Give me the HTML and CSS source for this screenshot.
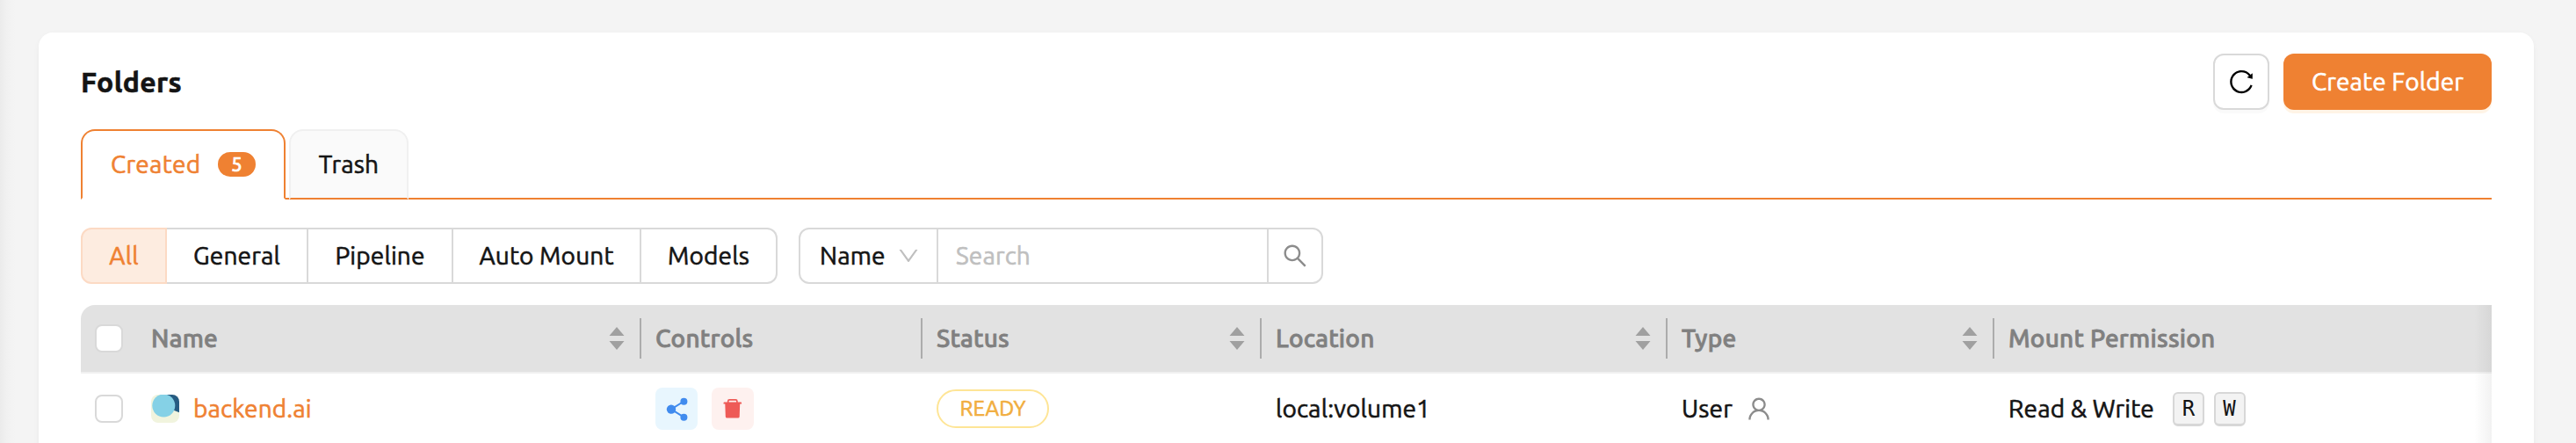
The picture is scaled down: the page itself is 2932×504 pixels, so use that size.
FILE: index.html
```html
<!DOCTYPE html>
<html lang="en">
<head>
<meta charset="utf-8">
<title>Folders</title>
<link rel="stylesheet" href="styles.css">
</head>
<body>
<main class="page">
  <section class="card">
    <header class="card-head">
      <h1 class="title">Folders</h1>
      <div class="actions">
        <button class="btn btn-icon" aria-label="Refresh">
          <svg class="icon" viewBox="0 0 1024 1024"><path d="M909.1 209.3l-56.4 44.1C775.8 155.1 656.2 92 521.9 92 290 92 102.3 279.5 102 511.5 101.7 743.7 289.8 932 521.9 932c181.3 0 335.8-115 394.6-276.1 1.5-4.2-.7-8.9-4.9-10.3l-56.7-19.5a8 8 0 00-10.1 4.8c-1.8 5-3.8 10-5.9 14.9-17.3 41-42.1 77.8-73.7 109.4A344.77 344.77 0 01655.9 829c-42.3 17.9-87.4 27-133.8 27-46.5 0-91.5-9.1-133.8-27A341.5 341.5 0 01279 755.2a342.16 342.16 0 01-73.7-109.4c-17.9-42.4-27-87.4-27-133.9s9.1-91.5 27-133.9c17.3-41 42.1-77.8 73.7-109.4 31.6-31.6 68.4-56.4 109.3-73.8 42.3-17.9 87.4-27 133.8-27 46.5 0 91.5 9.1 133.8 27a341.5 341.5 0 01109.3 73.8c9.9 9.9 19.2 20.4 27.8 31.4l-60.2 47a8 8 0 003 14.1l175.6 43c5 1.2 9.9-2.6 9.9-7.7l.8-180.9c-.1-6.6-7.8-10.3-13-6.2z"/></svg>
        </button>
        <button class="btn btn-primary">Create Folder</button>
      </div>
    </header>

    <nav class="tabs">
      <div class="tab tab-active"><span class="tab-label">Created</span><span class="badge">5</span></div>
      <div class="tab tab-idle">Trash</div>
    </nav>

    <div class="filters">
      <div class="segments">
        <div class="segment segment-active seg-all">All</div>
        <div class="segment seg-general">General</div>
        <div class="segment seg-pipeline">Pipeline</div>
        <div class="segment seg-auto">Auto Mount</div>
        <div class="segment seg-models">Models</div>
      </div>
      <div class="search">
        <div class="search-field"><span>Name</span>
          <svg class="chevron" viewBox="0 0 1024 1024"><path d="M884 256h-75c-5.1 0-9.9 2.5-12.9 6.6L512 654.2 227.9 262.6c-3-4.1-7.8-6.6-12.9-6.6h-75c-6.5 0-10.3 7.4-6.5 12.7l352.6 486.1c12.8 17.6 39 17.6 51.7 0l352.6-486.1c3.9-5.3.1-12.7-6.4-12.7z"/></svg>
        </div>
        <div class="search-input">Search</div>
        <div class="search-button">
          <svg class="icon" viewBox="0 0 1024 1024"><path d="M909.6 854.5L649.9 594.8C690.2 542.7 712 479 712 412c0-80.2-31.3-155.4-87.9-212.1-56.6-56.7-132-87.9-212.1-87.9s-155.5 31.3-212.1 87.9C143.2 256.5 112 331.8 112 412c0 80.1 31.3 155.5 87.9 212.1C256.5 680.8 331.8 712 412 712c67 0 130.6-21.8 182.7-62l259.7 259.6a8.2 8.2 0 0011.6 0l43.6-43.5a8.2 8.2 0 000-11.6zM570.4 570.4C528 612.7 471.8 636 412 636s-116-23.3-158.4-65.6C211.3 528 188 471.8 188 412s23.3-116.1 65.6-158.4C296 211.3 352.2 188 412 188s116.1 23.2 158.4 65.6S636 352.2 636 412s-23.3 116.1-65.6 158.4z"/></svg>
        </div>
      </div>
    </div>

    <div class="table">
      <div class="row row-head">
        <div class="cell cell-check"><span class="checkbox"></span></div>
        <div class="cell divided"><span>Name</span><svg class="sorter" viewBox="0 0 18 26"><path d="M9 0l8.5 10H.5zM9 26L.5 16h17z"/></svg></div>
        <div class="cell divided"><span>Controls</span></div>
        <div class="cell divided"><span>Status</span><svg class="sorter" viewBox="0 0 18 26"><path d="M9 0l8.5 10H.5zM9 26L.5 16h17z"/></svg></div>
        <div class="cell divided"><span>Location</span><svg class="sorter" viewBox="0 0 18 26"><path d="M9 0l8.5 10H.5zM9 26L.5 16h17z"/></svg></div>
        <div class="cell divided"><span>Type</span><svg class="sorter" viewBox="0 0 18 26"><path d="M9 0l8.5 10H.5zM9 26L.5 16h17z"/></svg></div>
        <div class="cell"><span>Mount Permission</span></div>
      </div>
      <div class="row row-body">
        <div class="cell cell-check"><span class="checkbox"></span></div>
        <div class="cell">
          <svg class="avatar" viewBox="0 0 32 32"><rect width="32" height="32" fill="#f1f4de"/><path d="M15 0h17v20.300l-7-2.800z" fill="#265b82"/><circle cx="14.300" cy="12.500" r="13" fill="#85d1e6"/></svg>
          <a class="folder-link">backend.ai</a>
        </div>
        <div class="cell controls">
          <span class="tool tool-share"><svg viewBox="0 0 48 48"><path d="M18 24.600L32.400 15.500M18 24.600l14.400 9" fill="none" stroke="#408bee" stroke-width="2"/><circle cx="18" cy="24.600" r="5.200"/><circle cx="32.400" cy="15.700" r="4"/><circle cx="32.400" cy="33.700" r="4"/></svg></span>
          <span class="tool tool-delete"><svg viewBox="0 0 48 48"><path d="M18.700 17v-1.600q0-1.600 1.600-1.600h7q1.600 0 1.600 1.600V17" fill="none" stroke="#ee5b57" stroke-width="1.700"/><path d="M14.500 16.600h18.700q.9 0 .9 1v.9h-1.900l-.5 14.500q-.1 1.600-1.700 1.600H17.500q-1.600 0-1.700-1.600l-.5-14.500h-1.800v-.9q0-1 1-1z"/></svg></span>
        </div>
        <div class="cell"><span class="tag">READY</span></div>
        <div class="cell"><span>local:volume1</span></div>
        <div class="cell"><span>User</span>
          <svg class="icon user-icon" viewBox="0 0 1024 1024"><path d="M858.5 763.6a374 374 0 00-80.6-119.5 375.63 375.63 0 00-119.5-80.6c-.4-.2-.8-.3-1.2-.5C719.5 518 760 444.7 760 362c0-137-111-248-248-248S264 225 264 362c0 82.7 40.5 156 102.8 201.1-.4.2-.8.3-1.2.5-44.8 18.9-85 46-119.5 80.6a375.63 375.63 0 00-80.6 119.5A371.7 371.7 0 00136 901.8a8 8 0 008 8.2h60c4.4 0 7.9-3.5 8-7.8 2-77.2 33-149.5 87.8-204.3 56.7-56.7 132-87.9 212.2-87.9s155.500 31.200 212.200 87.900C779 752.700 810 825 812 902.200c.1 4.400 3.600 7.800 8 7.800h60a8 8 0 008-8.200c-1-47.800-10.900-94.300-29.500-138.200zM512 534c-45.900 0-89.100-17.900-121.600-50.400S340 407.900 340 362c0-45.900 17.900-89.100 50.400-121.600S466.100 190 512 190s89.100 17.900 121.600 50.400S684 316.100 684 362c0 45.900-17.900 89.100-50.400 121.600S557.900 534 512 534z"/></svg>
        </div>
        <div class="cell"><span class="permission">Read &amp; Write</span><kbd class="key">R</kbd><kbd class="key">W</kbd></div>
      </div>
    </div>
  </section>
</main>
</body>
</html>
```
FILE: styles.css
```css
* {
  box-sizing: border-box;
}

body {
  margin: 0;
  overflow: hidden;
  background: #f4f4f4;
  color: #141414;
  font-family: Ubuntu, "Noto Sans", sans-serif;
  font-size: 28px;
  line-height: 44px;
  letter-spacing: 0.15px;
  -webkit-text-stroke-width: 0.6px;
}

.page {
  height: 504px;
  padding: 37px 48px 0 44px;
  overflow: hidden;
  background: linear-gradient(90deg, #ebebeb 0, #f1f1f1 8px, #f4f4f4 17px);
}

.card {
  height: 520px;
  padding: 24px 48px 0;
  border-radius: 16px;
  background: #fff;
  box-shadow: 0 2px 4px rgba(0, 0, 0, 0.03), 0 2px 12px rgba(0, 0, 0, 0.02);
}

.card-head {
  display: flex;
  justify-content: space-between;
  height: 86px;
}

.title {
  margin: 0;
  font-size: 32px;
  line-height: 64px;
  font-weight: 700;
  letter-spacing: 0.35px;
}

.actions {
  display: flex;
  gap: 16px;
}

.btn {
  display: flex;
  align-items: center;
  justify-content: center;
  height: 64px;
  padding: 0;
  border: 0;
  border-radius: 12px;
  font: inherit;
  letter-spacing: inherit;
}

.btn-icon {
  width: 64px;
  border: 2px solid #d9d9d9;
  background: #fff;
  box-shadow: 0 4px 0 rgba(0, 0, 0, 0.02);
}

.btn-primary {
  width: 237px;
  background: #ef8132;
  color: #fff;
  box-shadow: 0 4px 0 #fff4e6;
}

.icon {
  width: 32px;
  height: 32px;
}

.tabs {
  display: flex;
  gap: 4px;
  height: 80px;
  background: linear-gradient(#ef8132, #ef8132) 232px 100% / 100% 2px no-repeat;
}

.tab {
  display: flex;
  align-items: center;
  border: 2px solid;
  border-radius: 16px 16px 0 0;
}

.tab-active {
  width: 233px;
  padding-left: 32px;
  border-color: #ef8132;
  border-bottom-color: #fff;
  color: #ef8132;
}

.tab-label {
  width: 122px;
  letter-spacing: 0.3px;
}

.badge {
  width: 43px;
  height: 28px;
  border-radius: 14px;
  background: #ef8132;
  color: #fff;
  font-size: 22px;
  font-weight: 500;
  line-height: 28px;
  text-align: center;
}

.tab-idle {
  justify-content: center;
  width: 136px;
  border-color: #f0f0f0;
  border-bottom-color: #ef8132;
  background: #fafafa;
}

.filters {
  display: flex;
  gap: 24px;
  height: 64px;
  margin-top: 32px;
}

.segments {
  display: flex;
}

.segment {
  display: flex;
  align-items: center;
  justify-content: center;
  border: 2px solid #d9d9d9;
  border-left: 0;
}

.segment-active {
  border: 2px solid #fcdac4;
  border-radius: 12px 0 0 12px;
  background: #fdece0;
  color: #ef8132;
}

.seg-all {
  width: 98px;
}

.seg-general {
  width: 161px;
}

.seg-pipeline {
  width: 165px;
}

.seg-auto {
  width: 214px;
}

.seg-models {
  width: 155px;
  border-radius: 0 12px 12px 0;
}

.search {
  display: flex;
  width: 597px;
  border: 2px solid #d9d9d9;
  border-radius: 12px;
}

.search-field {
  display: flex;
  align-items: center;
  justify-content: space-between;
  width: 157px;
  padding: 0 18px 0 22px;
  border-right: 2px solid #d9d9d9;
}

.chevron {
  width: 28px;
  height: 28px;
  fill: #bfbfbf;
}

.search-input {
  display: flex;
  align-items: center;
  flex: 1;
  padding-left: 20px;
  color: #bfbfbf;
}

.search-button {
  display: flex;
  align-items: center;
  justify-content: center;
  width: 62px;
  border-left: 2px solid #d9d9d9;
  fill: #8c8c8c;
}

.table {
  position: relative;
  margin-top: 24px;
  border-radius: 16px 0 0 0;
  overflow: hidden;
}

.table::after {
  content: "";
  position: absolute;
  top: 0;
  right: 0;
  bottom: 0;
  width: 20px;
  background: linear-gradient(90deg, rgba(5, 5, 5, 0), rgba(5, 5, 5, 0.05));
}

.row {
  display: grid;
  grid-template-columns: 64px 574px 320px 386px 462px 372px 566px;
}

.row-head {
  height: 78px;
  border-bottom: 2px solid #f0f0f0;
  background: #e2e2e2;
  color: #808080;
  font-weight: 500;
  letter-spacing: 0.25px;
  -webkit-text-stroke-width: 0.8px;
}

.row-body {
  height: 84px;
  padding-bottom: 4px;
}

.cell {
  position: relative;
  display: flex;
  align-items: center;
  padding: 0 16px;
}

.row-head .cell {
  justify-content: space-between;
}

.divided::after {
  content: "";
  position: absolute;
  top: 15px;
  right: 0;
  width: 2px;
  height: 46px;
  background: #acacac;
}

.sorter {
  width: 18px;
  height: 26px;
  margin-right: 3px;
  fill: #a0a0a0;
}

.checkbox {
  width: 32px;
  height: 32px;
  border: 2px solid #d9d9d9;
  border-radius: 8px;
  background: #fff;
}

.avatar {
  width: 32px;
  height: 32px;
  margin-right: 16px;
  border-radius: 8px;
}

.folder-link {
  color: #ef8132;
}

.controls {
  gap: 16px;
}

.tool {
  display: flex;
  width: 48px;
  height: 48px;
  border-radius: 8px;
}

.tool-share {
  background: #e8f6fe;
  fill: #408bee;
}

.tool-delete {
  background: #fef1ef;
  fill: #ee5b57;
}

.tag {
  width: 128px;
  height: 44px;
  border: 2px solid #fee596;
  border-radius: 22px;
  color: #f1ae40;
  font-size: 24px;
  line-height: 40px;
  text-align: center;
}

.user-icon {
  margin-left: 14px;
  fill: #8c8c8c;
}

.permission {
  width: 187px;
}

.key {
  width: 36px;
  height: 39px;
  margin-right: 10.5px;
  border: 2px solid #d7d7d7;
  border-bottom-width: 3px;
  border-radius: 6px;
  background: #f3f3f3;
  font-family: "DejaVu Sans Mono", monospace;
  font-size: 24px;
  line-height: 35px;
  text-align: center;
  -webkit-text-stroke-width: 0;
}
```
